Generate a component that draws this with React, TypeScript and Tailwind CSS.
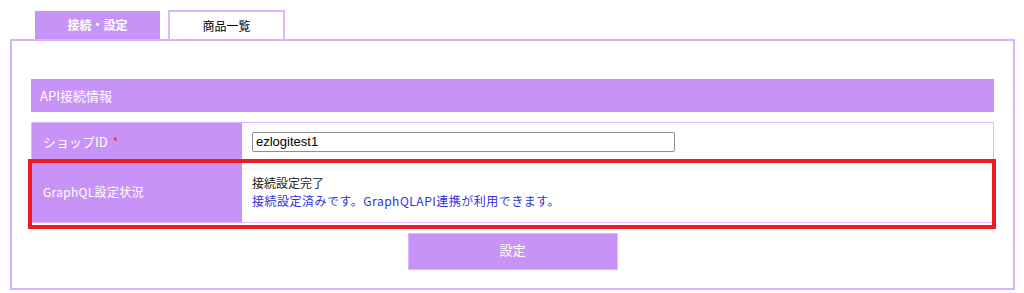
export default function App() {
  return (
    <div
      className="relative w-[1024px] h-[293px] bg-white"
      style={{ fontFamily: '"Noto Sans CJK JP", "Noto Sans", sans-serif' }}
    >
      {/* タブ */}
      <div className="flex items-end gap-[8px] pl-[35px] pt-[10px] h-[39px]">
        <div className="w-[125px] h-[28px] bg-[#c893f6] text-white text-[12px] font-bold flex items-center justify-center">
          接続・設定
        </div>
        <div className="w-[117px] h-[29px] border-2 border-b-0 border-[#dcb9fb] bg-white text-black text-[12px] flex items-center justify-center">
          商品一覧
        </div>
      </div>

      {/* 本体 */}
      <div className="ml-[10px] w-[1005px] h-[251px] border-2 border-[#d8b2fb] px-[19px] pt-[38px]">
        <div className="h-[33px] bg-[#c893f6] px-[9px] flex items-center text-white text-[13px]">API接続情報</div>

        <div className="mt-[10px] border border-[#dcb9fb]">
          <div className="flex h-[37px]">
            <div className="w-[210px] bg-[#c893f6] flex items-center px-[11px] text-white text-[13px]">
              ショップID<span className="text-[#ff1f3d] ml-[5px] text-[12px]">*</span>
            </div>
            <div className="flex-1 flex items-center px-[10px]">
              <input
                readOnly
                value="ezlogitest1"
                className="w-[423px] h-[20px] border border-[#8f8f8f] rounded-[2px] px-[3px] text-[13px] text-black outline-none"
                style={{ fontFamily: '"Liberation Sans", Arial, sans-serif' }}
              />
            </div>
          </div>
          <div className="flex h-[62px] border-t border-[#dcb9fb]">
            <div className="w-[210px] bg-[#c893f6] flex items-center px-[11px] text-white text-[12px] tracking-[0.3px]">
              GraphQL設定状況
            </div>
            <div className="flex-1 flex flex-col justify-center px-[10px] text-[12px] leading-[18px]">
              <p className="text-[#222]">接続設定完了</p>
              <p className="text-[#2f2fe0] tracking-[0.5px]">接続設定済みです。GraphQLAPI連携が利用できます。</p>
            </div>
          </div>
        </div>

        <div className="mt-[10px] mx-auto w-[210px] h-[37px] bg-[#c893f6] border border-[#dcb9fb] flex items-center justify-center text-white text-[13px] pb-[3px]">
          設定
        </div>
      </div>

      {/* 注釈の赤枠 */}
      <div className="absolute left-[28px] top-[159px] w-[968px] h-[70px] border-[4px] border-[#ed1c24] pointer-events-none" />
    </div>
  );
}
